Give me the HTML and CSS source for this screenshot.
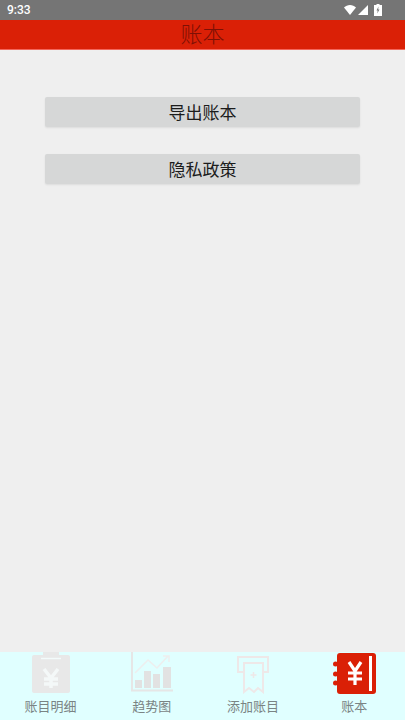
FILE: index.html
```html
<!doctype html>
<html lang="zh-CN">
  <head>
    <meta charset="UTF-8" />
    <meta name="viewport" content="width=device-width, initial-scale=1.0" />
    <title>账本</title>
    <link rel="stylesheet" href="styles.css">
  </head>
  <body>
    <div class="status-bar">
      <span class="status-time">9:33</span>
      <div class="status-icons">
        <svg width="12" height="10" viewBox="0 0 13 10" preserveAspectRatio="none"><path d="M0 2.600C1.800 1 4 0 6.500 0S11.200 1 13 2.600L6.500 10z" fill="#fff"/></svg>
        <svg width="10" height="10" viewBox="0 0 11 11"><path d="M11 0v11H0z" fill="#fff"/></svg>
        <svg class="battery" width="8" height="12" viewBox="0 0 8 12"><path d="M2.500 0h3v1H8v11H0V1h2.500z" fill="#fff"/><path d="M4.500 2.500L2.500 6.500h1.200L3.200 9.500 5.500 5.500H4.200z" fill="#757575"/></svg>
      </div>
    </div>

    <header class="title-bar">账本</header>

    <main class="content">
      <button class="action-button">导出账本</button>
      <button class="action-button">隐私政策</button>
    </main>

    <nav class="tab-bar">
      <div class="tab">
        <div class="icon-box">
          <svg width="38" height="41" viewBox="0 0 38 41">
            <path d="M2 3h9V0h16v3h9a2 2 0 0 1 2 2v34a2 2 0 0 1-2 2H2a2 2 0 0 1-2-2V5a2 2 0 0 1 2-2z" fill="#e8e8e8"/>
            <path d="M9 6.500h20" stroke="#f3fbfb" stroke-width="1.500" fill="none"/>
            <path d="M12 17l7 9 7-9M19 26v10M12 27h14M12 32h14" stroke="#f4f8f8" stroke-width="3.500" fill="none"/>
          </svg>
        </div>
        <span class="tab-label">账目明细</span>
      </div>
      <div class="tab">
        <div class="icon-box">
          <svg width="42" height="40" viewBox="0 0 42 40">
            <path d="M1 0v38.500h41" stroke="#e6e6e6" stroke-width="2" fill="none"/>
            <path d="M4 21l13-13 9 8 11-12M32 4h6v6" stroke="#eeeeee" stroke-width="1.500" fill="none"/>
            <path d="M4 28h7v8H4zM13 19h7v17h-7zM22 22h7v14h-7zM32 15h8v21h-8z" fill="#e2e2e2"/>
          </svg>
        </div>
        <span class="tab-label">趋势图</span>
      </div>
      <div class="tab">
        <div class="icon-box">
          <svg class="icon-low" width="33" height="38" viewBox="0 0 33 38">
            <path d="M7 16H1V1h30v15h-5" stroke="#eee8e8" stroke-width="2" fill="none"/>
            <path d="M7 7h19v29l-5-4-4 4-5-4-5 4z" stroke="#eee8e8" stroke-width="2" fill="#e0ffff"/>
            <path d="M13.500 19h6M16.500 16v6" stroke="#eee8e8" stroke-width="1.500" fill="none"/>
          </svg>
        </div>
        <span class="tab-label">添加账目</span>
      </div>
      <div class="tab">
        <div class="icon-box">
          <svg class="icon-book" width="43" height="41" viewBox="0 0 43 41">
            <rect x="4" y="0" width="39" height="41" rx="3" fill="#da2006"/>
            <circle cx="2.500" cy="11" r="2.500" fill="#da2006"/>
            <circle cx="2.500" cy="21" r="2.500" fill="#da2006"/>
            <circle cx="2.500" cy="30" r="2.500" fill="#da2006"/>
            <path d="M16 9l6 9 6-9M22 18v14M15 20h14M15 26h14" stroke="#fff" stroke-width="3.200" fill="none"/>
            <rect x="36" y="3" width="3" height="35" fill="#fff"/>
          </svg>
        </div>
        <span class="tab-label">账本</span>
      </div>
    </nav>
  </body>
</html>
```

FILE: styles.css
```css
html, body {
  margin: 0;
  height: 100%;
}
body {
  display: flex;
  flex-direction: column;
  height: 720px;
  overflow: hidden;
  background-color: #efefef;
  font-family: "Roboto", "Noto Sans CJK SC", sans-serif;
}
.status-bar {
  height: 20px;
  flex: none;
  display: flex;
  justify-content: space-between;
  align-items: center;
  padding: 0 23px 0 7px;
  background: #757575;
  color: #fff;
}
.status-time {
  font-size: 12px;
  font-weight: 500;
}
.status-icons {
  display: flex;
  align-items: center;
  gap: 2px;
}
.battery {
  margin-left: 4px;
}
.title-bar {
  height: 29px;
  flex: none;
  border-bottom: 1px solid #f4665a;
  background: #da2006;
  color: #7d1005;
  font-size: 22px;
  font-weight: 300;
  line-height: 29px;
  text-align: center;
}
.content {
  flex: 1;
  display: flex;
  flex-direction: column;
  gap: 27px;
  padding: 47px 45px 0;
}
.action-button {
  height: 30px;
  padding: 0 0 2px;
  border: none;
  border-radius: 2px;
  background: #d6d7d7;
  box-shadow: 0 1px 2px rgba(0, 0, 0, 0.08);
  color: #1c1c1c;
  font-family: inherit;
  font-size: 17px;
}
.tab-bar {
  height: 68px;
  flex: none;
  display: grid;
  grid-template-columns: repeat(4, 1fr);
  background: #e0ffff;
}
.tab {
  display: flex;
  flex-direction: column;
  align-items: center;
  height: 68px;
}
.icon-box {
  height: 42px;
  flex: none;
}
.icon-box svg {
  display: block;
}
.icon-low {
  margin-top: 4px;
}
.icon-book {
  margin-top: 1px;
}
.tab-label {
  margin-top: 4px;
  color: #7a8484;
  font-size: 13px;
  line-height: 18px;
}
```
